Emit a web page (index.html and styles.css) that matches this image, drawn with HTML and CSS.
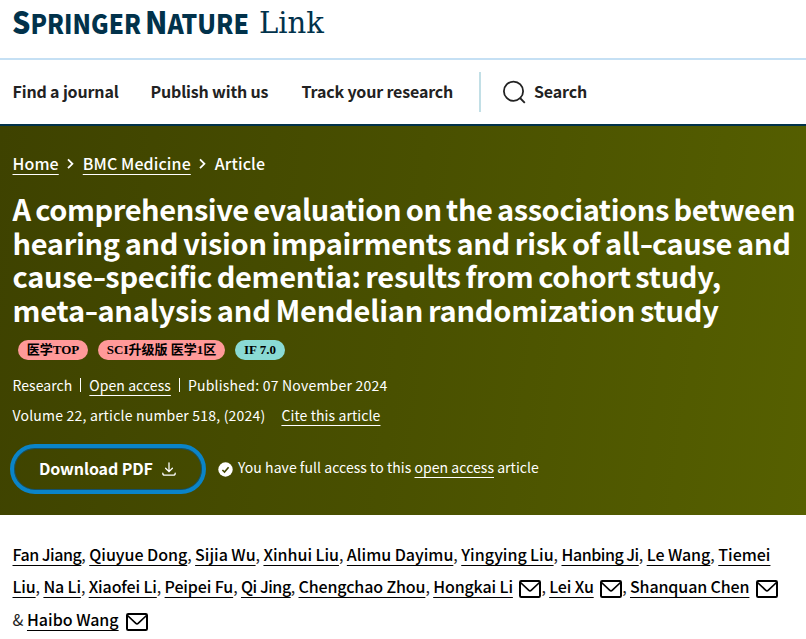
FILE: index.html
```html
<!DOCTYPE html>
<html lang="en">
<head>
  <meta charset="UTF-8">
  <title>A comprehensive evaluation | BMC Medicine</title>
  <link rel="stylesheet" href="styles.css">
</head>
<body>
  <svg width="0" height="0" class="sprite">
    <symbol id="mail" viewBox="0 0 22 18">
      <rect x="1" y="1" width="20" height="16" rx="1.2" fill="none" stroke="currentColor" stroke-width="2"/>
      <path d="M1.5 2.5 L9.6 10.2 Q11 11.4 12.4 10.2 L20.5 2.5" fill="none" stroke="currentColor" stroke-width="1.7"/>
    </symbol>
  </svg>

  <header class="header">
    <svg class="logo" width="330" height="44" viewBox="0 0 330 44">
      <g class="logo-bold">
        <text x="12" y="33.5" textLength="129" lengthAdjust="spacingAndGlyphs"><tspan class="cap">S</tspan>PRINGER</text>
        <text x="145" y="33.5" textLength="104" lengthAdjust="spacingAndGlyphs"><tspan class="cap">N</tspan>ATURE</text>
      </g>
      <text class="logo-link" x="259" y="33" textLength="65" lengthAdjust="spacingAndGlyphs">Link</text>
    </svg>
  </header>

  <nav class="nav">
    <a class="nav-find">Find a journal</a>
    <a class="nav-publish">Publish with us</a>
    <a class="nav-track">Track your research</a>
    <a class="nav-search">
      <svg width="24" height="24" viewBox="0 0 24 24" fill="none" stroke="currentColor" stroke-width="1.8">
        <circle cx="11.5" cy="11.2" r="9.6"/>
        <path d="M18 18 L22.8 22.8"/>
      </svg>
      <span>Search</span>
    </a>
  </nav>

  <section class="hero">
    <div class="crumbs">
      <a class="link">Home</a>
      <svg width="9" height="12" viewBox="0 0 9 12"><path d="M2 2.4 L6.4 6.8 L2 11.2"/></svg>
      <a class="link">BMC Medicine</a>
      <svg width="9" height="12" viewBox="0 0 9 12"><path d="M2 2.4 L6.4 6.8 L2 11.2"/></svg>
      <span>Article</span>
    </div>

    <h1 class="title">
      <span class="t1">A comprehensive evaluation on the associations between</span>
      <span class="t2">hearing and vision impairments and risk of all<i>-</i>cause and</span>
      <span class="t3">cause<i>-</i>specific dementia: results from cohort study,</span>
      <span class="t4">meta<i>-</i>analysis and Mendelian randomization study</span>
    </h1>

    <div class="tags">
      <span class="tag tag-top">医学TOP</span>
      <span class="tag tag-sci">SCI升级版 医学1区</span>
      <span class="tag tag-if">IF 7.0</span>
    </div>

    <ul class="meta">
      <li>Research</li>
      <li><a class="link">Open access</a></li>
      <li class="date">Published: 07 November 2024</li>
    </ul>
    <div class="meta-volume">
      <span>Volume 22, article number 518, (2024)</span>
      <a class="link">Cite this article</a>
    </div>

    <div class="actions">
      <a class="download">
        <span>Download PDF</span>
        <svg width="14" height="14" viewBox="0 0 14 14" fill="none" stroke="currentColor" stroke-width="1.3" stroke-linecap="round">
          <path d="M7 .8 V9.5 M3.6 6.3 L7 9.6 L10.4 6.3 M.8 11.2 Q.8 13.2 2.6 13.2 H11.4 Q13.2 13.2 13.2 11.2"/>
        </svg>
      </a>
      <div class="access">
        <svg width="15" height="15" viewBox="0 0 15 15">
          <circle cx="7.5" cy="7.5" r="7.2" fill="#fff"/>
          <path d="M4.4 8 L6.5 10 L10.6 5.2" fill="none" stroke="#414600" stroke-width="1.6"/>
        </svg>
        <span>You have full access to this <a class="link">open access</a> article</span>
      </div>
    </div>
  </section>

  <main class="authors">
    <div class="row a1"><a class="tight">Fan Jiang</a>, <a>Qiuyue Dong</a>, <a>Sijia Wu</a>, <a>Xinhui Liu</a>, <a>Alimu Dayimu</a>, <a>Yingying Liu</a>, <a class="tight">Hanbing Ji</a>, <a>Le Wang</a>, <a>Tiemei</a></div>
    <div class="row a2"><a>Liu</a>, <a>Na Li</a>, <a>Xiaofei Li</a>, <a>Peipei Fu</a>, <a class="tight">Qi Jing</a>, <a>Chengchao Zhou</a>, <a>Hongkai Li</a><svg class="mail"><use href="#mail"/></svg>, <a>Lei Xu</a><svg class="mail"><use href="#mail"/></svg>, <a>Shanquan Chen</a><svg class="mail"><use href="#mail"/></svg></div>
    <div class="row a3">&amp; <a>Haibo Wang</a><svg class="mail"><use href="#mail"/></svg></div>
  </main>
</body>
</html>
```
FILE: styles.css
```css
* { box-sizing: border-box; }
body {
  margin: 0;
  height: 639px;
  overflow: hidden;
  background: #fff;
  color: #222;
  font-family: "Noto Sans CJK SC", "Noto Sans", sans-serif;
  font-size: 16px;
}
.sprite {
  display: block;
}
.header {
  height: 60px;
  border-bottom: 2px solid #c5e0f4;
}
.logo {
  display: block;
}
.logo-bold {
  font-family: "Noto Sans CJK SC", sans-serif;
  font-weight: 900;
  font-size: 26px;
  fill: #01324b;
}
.cap {
  font-size: 31px;
}
.logo-link {
  font-family: "DejaVu Serif", serif;
  font-size: 29px;
  fill: #01324b;
}

.nav {
  display: flex;
  align-items: center;
  height: 66px;
  padding-left: 12.5px;
  border-bottom: 2px solid #01324b;
  font-weight: 700;
  letter-spacing: -0.16px;
  white-space: nowrap;
}
.nav-find,
.nav-publish,
.nav-track,
.nav-search span {
  padding-bottom: 2px;
}
.nav-find { width: 138px; }
.nav-publish { width: 151px; }
.nav-track { width: 177.5px; }
.nav-search {
  display: flex;
  align-items: center;
  gap: 8px;
  height: 40px;
  padding-left: 21px;
  border-left: 2px solid #c2dfe6;
}

.hero {
  height: 389px;
  padding: 25px 0 0 12.5px;
  background: linear-gradient(98deg, #3e4200 0%, #495000 50%, #566000 100%);
  color: #fff;
  white-space: nowrap;
}
.link {
  text-decoration: underline;
  text-decoration-thickness: 1px;
  text-decoration-skip-ink: none;
  text-underline-offset: 4px;
}
.crumbs {
  display: flex;
  align-items: center;
  gap: 7.5px;
  height: 24px;
  line-height: 24px;
  font-weight: 500;
  letter-spacing: 0.1px;
}
.crumbs svg {
  fill: none;
  stroke: #fff;
  stroke-width: 1.8;
}
.title {
  margin: 17px 0 0;
  font-size: 29px;
  font-weight: 700;
  line-height: 33.7px;
}
.title span {
  display: block;
}
/* wider hyphen */
.title i {
  display: inline-block;
  margin: 0 1px;
  font-style: normal;
  transform: scaleX(1.3);
}
.t1 {
  letter-spacing: -0.4px;
  word-spacing: -1.7px;
}
.t2 {
  letter-spacing: -0.33px;
  word-spacing: -1.2px;
}
.t3 {
  letter-spacing: -0.28px;
  word-spacing: -1.6px;
}
.t4 {
  letter-spacing: -0.2px;
  word-spacing: -1.5px;
}
.tags {
  display: flex;
  gap: 10px;
  margin: 13.2px 0 0 5.5px;
}
.tag {
  height: 20px;
  border-radius: 10px;
  background: #ff9999;
  color: #000;
  font: bold 13px/20px "Liberation Serif", "Noto Sans CJK SC", serif;
  text-align: center;
}
.tag-top { width: 70px; }
.tag-sci { width: 127px; }
.tag-if {
  width: 50px;
  background: #8adad4;
}
.meta {
  display: flex;
  align-items: center;
  margin: 13px 0 0;
  padding: 0;
  list-style: none;
  font-size: 14px;
  line-height: 24px;
  letter-spacing: 0.06px;
}
.meta li + li {
  display: flex;
  align-items: center;
}
.meta li + li::before {
  content: "";
  width: 1px;
  height: 14px;
  margin: 0 8px;
  background: #fff;
}
.meta .date {
  letter-spacing: 0.22px;
}
.meta-volume {
  display: flex;
  gap: 16px;
  margin-top: 6px;
  font-size: 14px;
  line-height: 24px;
  letter-spacing: 0.2px;
}
.meta-volume .link {
  letter-spacing: 0.1px;
}
.actions {
  display: flex;
  align-items: center;
  margin: 17px 0 0 -2.5px;
}
.download {
  display: flex;
  align-items: center;
  gap: 9px;
  width: 196px;
  height: 50px;
  padding-left: 25px;
  border: 4px solid #0a84c8;
  border-radius: 25px;
  box-shadow: inset 0 0 0 1px #14506a;
  font-weight: 700;
  letter-spacing: -0.1px;
}
.download span {
  padding-bottom: 2px;
}
.access {
  display: flex;
  align-items: center;
  gap: 5px;
  margin-left: 12px;
  font-size: 14px;
  letter-spacing: 0.05px;
}
.access span {
  padding-bottom: 4px;
}

.authors {
  padding: 23px 0 0 12.5px;
  line-height: 32px;
  white-space: nowrap;
}
.authors a {
  color: #000;
  font-weight: 500;
  text-decoration: underline;
  text-decoration-thickness: 1px;
  text-decoration-skip-ink: none;
  text-underline-offset: 4px;
}
.authors .tight {
  letter-spacing: -0.45px;
}
.row {
  height: 32px;
}
.a1 {
  word-spacing: -0.15px;
}
.a2 {
  height: 33px;
  letter-spacing: -0.12px;
}
.mail {
  width: 22px;
  height: 18px;
  margin-left: 7px;
  color: #000;
  vertical-align: -5px;
}
.a2 .mail {
  margin-left: 6.5px;
}
```
